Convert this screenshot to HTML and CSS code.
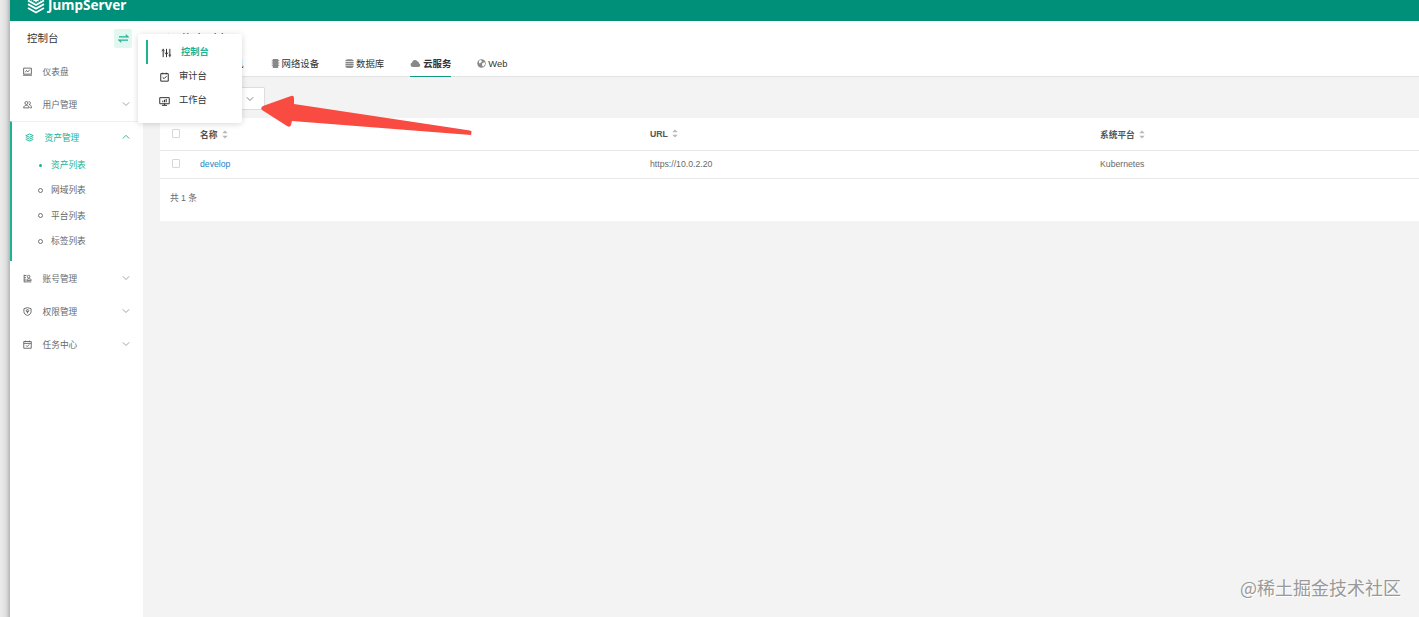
FILE: index.html
```html
<!DOCTYPE html>
<html lang="zh-CN">
<head>
    <meta charset="UTF-8">
    <meta name="viewport" content="width=device-width, initial-scale=1.0">
    <title>JumpServer</title>
    <link rel="stylesheet" href="styles.css">
</head>
<body>

    <div class="window">
        <!-- Top bar -->
        <header class="topbar">
            <svg class="logo" viewBox="0 0 18 20" fill="none" stroke="#fff" stroke-width="1.9">
                <path d="M1 4.5L9 0l8 4.5L9 9z" fill="#fff" stroke="none" />
                <path d="M1 6.5l8 4.5 8-4.5M1 10.2l8 4.5 8-4.5M1 14l8 4.5 8-4.5" />
                <path d="M4.5 6L9 8.5l4.5-2.5" stroke="#008f78" stroke-width="1" />
            </svg>
            <span class="brand">JumpServer</span>
        </header>

        <div class="body">
            <!-- Sidebar -->
            <aside class="sidebar">
                <div class="side-head">
                    <span>控制台</span>
                    <button class="switch">
                        <svg viewBox="0 0 12 10"><path d="M1 3.2h10L8.4.8M11 6.8H1l2.6 2.4" /></svg>
                    </button>
                </div>

                <a class="menu-item">
                    <svg class="icon" viewBox="0 0 12 12"><path d="M.8 1.5h10.400v8H.8zM0 11h12M3 7l1.800-2.500L6.500 6.500 9 3.500" /></svg>
                    <span>仪表盘</span>
                </a>
                <a class="menu-item">
                    <svg class="icon" viewBox="0 0 12 12"><circle cx="4.5" cy="4" r="2" /><path d="M.8 10.500c0-4.500 7.400-4.500 7.400 0zM7.500 2c3 0 3 4 .5 4 2 0 3.300 2 3.300 4.500H9.500" /></svg>
                    <span>用户管理</span>
                    <svg class="arrow" viewBox="0 0 8 8"><path d="M.8 2.3L4 5.5l3.200-3.200" /></svg>
                </a>

                <div class="menu-group">
                    <a class="menu-item active">
                        <svg class="icon" viewBox="0 0 12 12"><path d="M1 3.500L6 1.300l5 2.200-5 2.200zM1 6l5 2.200L11 6M1 8.500l5 2.200 5-2.200" /></svg>
                        <span>资产管理</span>
                        <svg class="arrow" viewBox="0 0 8 8"><path d="M.8 5.500L4 2.300l3.200 3.200" /></svg>
                    </a>
                    <a class="sub-item current">资产列表</a>
                    <a class="sub-item">网域列表</a>
                    <a class="sub-item">平台列表</a>
                    <a class="sub-item">标签列表</a>
                </div>

                <a class="menu-item">
                    <svg class="icon" viewBox="0 0 12 12"><path d="M1.500 1v10M1.500 2h3M1.500 5h2.500M1.500 8h2.500M1.500 10.500h9.500M5 8.500c0-3 6-3 6 0z" /><circle cx="7.500" cy="3.500" r="1.800" /></svg>
                    <span>账号管理</span>
                    <svg class="arrow" viewBox="0 0 8 8"><path d="M.8 2.300L4 5.500l3.200-3.200" /></svg>
                </a>
                <a class="menu-item">
                    <svg class="icon" viewBox="0 0 12 12"><path d="M6 .8l4.800 1.500v4c0 2.500-2.300 4.200-4.800 5-2.500-.8-4.800-2.500-4.800-5v-4z" /><circle cx="6" cy="5" r="1.700" /><path d="M6 5v3.500" /></svg>
                    <span>权限管理</span>
                    <svg class="arrow" viewBox="0 0 8 8"><path d="M.8 2.300L4 5.500l3.200-3.200" /></svg>
                </a>
                <a class="menu-item">
                    <svg class="icon" viewBox="0 0 12 12"><path d="M1 2h10v9H1zM1 4.500h10M3.500 .8v2M8.500 .8v2M4 7.200l1.600 1.600L8.300 6" /></svg>
                    <span>任务中心</span>
                    <svg class="arrow" viewBox="0 0 8 8"><path d="M.8 2.300L4 5.500l3.200-3.200" /></svg>
                </a>
            </aside>

            <!-- Content -->
            <main class="main">
                <div class="page-head">
                    <div class="title">
                        <svg viewBox="0 0 10 10"><path d="M4.500 1L1 5l3.500 4M1 5h8.500" /></svg>
                        <h1>资产列表</h1>
                    </div>
                    <nav class="tabs">
                        <a class="tab first">主机</a>
                        <a class="tab">
                            <svg class="tab-icon" viewBox="0 0 10 10"><path d="M2 0h6v10H2zM.8 1.500h8.400v1H.8zM.8 4h8.400v1H.8zM.8 6.500h8.400v1H.8z" /></svg>
                            网络设备
                        </a>
                        <a class="tab">
                            <svg class="tab-icon" viewBox="0 0 10 10"><path d="M.5 1.500C.5-.3 9.500-.3 9.500 1.500v.8h-9zM.5 3h9v1.700h-9zM.5 5.400h9v1.700h-9zM.5 7.800h9v.8c0 1.800-9 1.800-9 0z" /></svg>
                            数据库
                        </a>
                        <a class="tab selected">
                            <svg class="tab-icon cloud" viewBox="0 0 12 10"><path d="M3 9a2.700 2.700 0 0 1-.8-5.200 3.300 3.300 0 0 1 6.200-1A2.200 2.200 0 0 1 10 5a2.100 2.100 0 0 1-.5 4z" /></svg>
                            云服务
                        </a>
                        <a class="tab">
                            <svg class="tab-icon" viewBox="0 0 10 10"><circle cx="5" cy="5" r="4.700" /><path d="M2 2l2.500-.8 1 1.300L4 4.500 2.500 5zM6 4.500l2.500-1 .5 2L7 8.500 5.500 7z" fill="#fff" /></svg>
                            Web
                        </a>
                    </nav>
                </div>

                <div class="toolbar">
                    <button class="more">
                        <svg class="arrow" viewBox="0 0 8 8"><path d="M.8 2.300L4 5.500l3.200-3.200" /></svg>
                    </button>
                </div>

                <div class="card">
                    <div class="row head">
                        <span><i class="check"></i></span>
                        <span>名称<svg class="sort" viewBox="0 0 6 10"><path d="M0 3.500L3 .5l3 3zM0 6.500l3 3 3-3z" /></svg></span>
                        <span>URL<svg class="sort" viewBox="0 0 6 10"><path d="M0 3.500L3 .5l3 3zM0 6.500l3 3 3-3z" /></svg></span>
                        <span>系统平台<svg class="sort" viewBox="0 0 6 10"><path d="M0 3.500L3 .5l3 3zM0 6.500l3 3 3-3z" /></svg></span>
                    </div>
                    <div class="row">
                        <span><i class="check"></i></span>
                        <a class="link">develop</a>
                        <span>https://10.0.2.20</span>
                        <span>Kubernetes</span>
                    </div>
                    <div class="total">共 1 条</div>
                </div>
            </main>
        </div>
    </div>

    <!-- View switcher -->
    <div class="popover">
        <a class="view on">
            <svg viewBox="0 0 12 12"><path d="M2 1v10M6 1v10M10 1v10M.3 3.500L2 2l1.700 1.500M4.300 5.500L6 8l1.700-2.500M8.500 8.500h3" /></svg>
            控制台
        </a>
        <a class="view">
            <svg viewBox="0 0 12 12"><path d="M1.500 2h9v9h-9zM4 .8v2M8 .8v2M3.800 6.300l1.700 1.700 3-3" /></svg>
            审计台
        </a>
        <a class="view">
            <svg viewBox="0 0 12 12"><path d="M.3 2h11.400v7.300H.3zM3 11.200h6M6 9v2M4 7.500V5.500M6 7.500V4.500M8 7.500V3.500" /></svg>
            工作台
        </a>
    </div>

    <svg class="pointer" viewBox="0 0 212 36"><path d="M2 12L30 2Q33 1 33 4L33 10L209 36.500Q211 37 210.500 38L210 41L31 27L30 31Q29 34 26 32L1 16Q-1 14 2 12z" /></svg>

    <div class="watermark">@稀土掘金技术社区</div>
</body>
</html>
```
FILE: styles.css
```css
*,
*::before {
    box-sizing: border-box;
}

body {
    margin: 0;
    height: 617px;
    overflow: hidden;
    position: relative;
    padding-left: 10px;
    background: linear-gradient(to right, #ececec 0, #dedede 6px, #b5b5b5 10px);
    font-family: "Liberation Sans", "Noto Sans CJK SC", sans-serif;
    font-size: 8.7px;
    color: #676a6c;
}

svg {
    flex-shrink: 0;
}

.window {
    height: 617px;
    display: flex;
    flex-direction: column;
    background: #f3f3f3;
}

/* Top bar */
.topbar {
    height: 21px;
    flex-shrink: 0;
    display: flex;
    align-items: flex-start;
    padding-left: 17px;
    background: #008f78;
}

.logo {
    width: 18px;
    height: 20px;
    margin-top: -6px;
}

.brand {
    margin-left: 3px;
    font-family: "Noto Sans", sans-serif;
    font-size: 13.5px;
    line-height: 11px;
    font-weight: 700;
    color: #fff;
}

.body {
    flex: 1;
    display: flex;
}

/* Sidebar */
.sidebar {
    width: 133px;
    background: #fff;
}

.side-head {
    height: 34px;
    display: flex;
    align-items: center;
    justify-content: space-between;
    padding: 0 11px 0 17px;
    font-size: 10.5px;
    color: #333;
}

    .side-head span {
        padding-bottom: 2px;
    }

.switch {
    width: 18px;
    height: 19px;
    padding: 0;
    display: flex;
    align-items: center;
    justify-content: center;
    border: none;
    border-radius: 2px;
    background: #e3f7f1;
}

    .switch svg {
        width: 11px;
        height: 9px;
        fill: none;
        stroke: #1ab394;
        stroke-width: 1.2;
    }

.menu-item {
    height: 33px;
    display: flex;
    align-items: center;
    padding: 0 13px;
}

    .menu-item span {
        margin-left: 10.5px;
        flex: 1;
    }

.icon {
    width: 9px;
    height: 9px;
    fill: none;
    stroke: #606365;
    stroke-width: 1.2;
}

.arrow {
    width: 8px;
    height: 8px;
    margin-top: -2px;
    fill: none;
    stroke: #999;
    stroke-width: .9;
}

.menu-group {
    height: 140px;
    margin-bottom: 1px;
    border-left: 2px solid #1ab394;
    border-top: 1px solid #eee;
}

.menu-item.active,
.sub-item.current {
    color: #1ab394;
}

    .menu-item.active svg {
        stroke: #1ab394;
    }

.menu-group .menu-item {
    height: 31px;
}

.sub-item {
    height: 25.3px;
    position: relative;
    top: -1px;
    display: flex;
    align-items: center;
    padding-left: 26px;
}

    .sub-item::before {
        content: "";
        width: 5px;
        height: 5px;
        margin: 1px 8px 0 0;
        border: 1px solid #707274;
        border-radius: 50%;
    }

    .sub-item.current::before {
        width: 3px;
        height: 3px;
        margin: 1px 9px 0 1px;
        border: none;
        background: #1ab394;
    }

/* Content */
.main {
    flex: 1;
    min-width: 0;
}

.page-head {
    height: 56px;
    padding-left: 17px;
    background: #fff;
    border-bottom: 1px solid #e2e3e4;
}

.title {
    height: 29px;
    display: flex;
    align-items: flex-start;
    padding: 9px 0 0 4px;
}

    .title svg {
        width: 9px;
        height: 9px;
        margin: 3px 9px 0 0;
        fill: none;
        stroke: #333;
    }

h1 {
    margin: 0;
    font-size: 11.5px;
    line-height: 18px;
    font-weight: 400;
    color: #333;
}

.tabs {
    display: flex;
    gap: 26px;
}

.tab {
    height: 27px;
    display: flex;
    align-items: center;
    gap: 2px;
    padding-bottom: 1px;
    font-size: 9.4px;
    color: #333;
}

    .tab.first {
        width: 84.5px;
        padding-right: 1px;
        justify-content: flex-end;
    }

    .tab.selected {
        padding-bottom: 0;
        font-weight: 700;
        border-bottom: 1px solid #109b80;
    }

.tab-icon {
    width: 9px;
    height: 9px;
    fill: #888;
}

    .tab-icon.cloud {
        width: 11px;
    }

.toolbar {
    height: 41px;
    padding: 10px 0 0 92px;
}

.more {
    width: 30px;
    height: 23px;
    padding: 0 10px;
    display: flex;
    align-items: center;
    border: 1px solid #ddd;
    border-radius: 1px;
    background: #fff;
}

    .more .arrow {
        margin-top: 0;
        stroke: #777;
    }

.card {
    height: 103px;
    margin-left: 17px;
    background: #fff;
}

.row {
    height: 28px;
    display: grid;
    grid-template-columns: 40px 450px 450px 1fr;
    align-items: center;
    padding-bottom: 1px;
    border-bottom: 1px solid #e7e8ea;
}

    .row.head {
        height: 33px;
        padding-bottom: 0;
        font-weight: 700;
        color: #555;
    }

.check {
    display: block;
    width: 8px;
    height: 9px;
    margin: -2px 0 0 12px;
    border: 1px solid #d5d7da;
    border-radius: 1px;
}

.sort {
    width: 6px;
    height: 9px;
    margin-left: 4.5px;
    vertical-align: -1px;
    fill: #b4b7bd;
}

.link {
    color: #1c84c6;
}

.total {
    padding: 12px 10px;
    line-height: 14px;
}

/* View switcher */
.popover {
    position: absolute;
    left: 138px;
    top: 34px;
    width: 104px;
    height: 89px;
    padding: 6px 0 0 8px;
    background: #fff;
    border-radius: 2px;
    box-shadow: 0 1px 6px rgba(0, 0, 0, 0.16);
}

.view {
    height: 24px;
    display: flex;
    align-items: center;
    gap: 9px;
    padding: 0 0 2px 13px;
    font-size: 9.3px;
    color: #333;
}

    .view svg {
        width: 11px;
        height: 10px;
        margin-top: 3px;
        fill: none;
        stroke: #333;
        stroke-width: 1.2;
    }

    .view.on {
        border-left: 2px solid #1ab394;
        font-weight: 700;
        color: #1ab394;
    }

.pointer {
    position: absolute;
    left: 261px;
    top: 94px;
    width: 212px;
    height: 36px;
    overflow: visible;
    fill: #fa4b43;
}

.watermark {
    position: absolute;
    right: 18px;
    bottom: 16px;
    font-family: "Noto Sans CJK SC", sans-serif;
    font-size: 18px;
    line-height: 27px;
    color: #999;
    text-shadow: 1px 1px 0 #fff;
}
```
